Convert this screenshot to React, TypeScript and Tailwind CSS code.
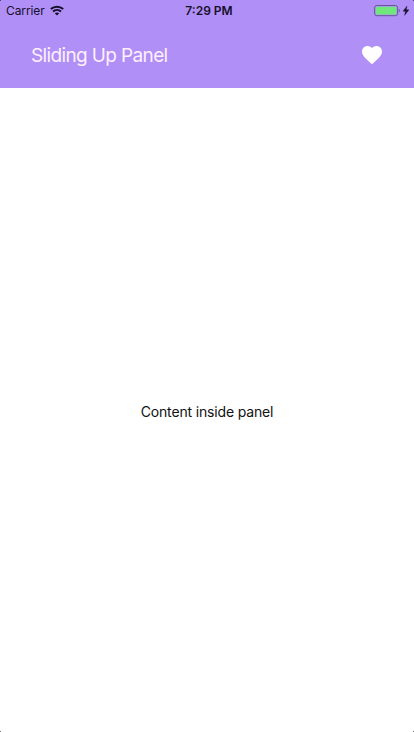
function WifiIcon() {
  return (
    <svg className="h-[11px] w-[14px]" viewBox="0 0 14 11" fill="none" stroke="#17102a" strokeWidth="2">
      <path d="M0.8 4.1 C4.3 0.9 9.7 0.9 13.2 4.1" />
      <path d="M3 6.5 C5.3 4.4 8.7 4.4 11 6.5" />
      <path d="M7 10.5 L4.8 8.3 C6 7.1 8 7.1 9.2 8.3 Z" fill="#17102a" stroke="none" />
    </svg>
  );
}

function BatteryIcon() {
  return (
    <svg className="h-[14px] w-[37px]" viewBox="0 0 37 14">
      <rect x="0.6" y="1.5" width="23" height="10.2" rx="2.2" fill="none" stroke="#65559b" />
      <rect x="1.8" y="2.7" width="20.6" height="7.8" rx="1" fill="#70e77b" />
      <path d="M24.8 4.8 C26.2 5.2 26.2 8 24.8 8.4 Z" fill="#65559b" />
      <path d="M33 2 L29 7.2 H31.5 L30.5 11.5 L35 5.8 H32.3 Z" fill="#17102a" stroke="#17102a" strokeWidth="0.3" />
    </svg>
  );
}

function HeartIcon() {
  return (
    <svg className="h-6 w-6" viewBox="0 0 24 24" fill="#ffffff">
      <path d="M12 21.35l-1.45-1.32C5.4 15.36 2 12.28 2 8.5 2 5.42 4.42 3 7.5 3c1.74 0 3.41.81 4.5 2.09C13.09 3.81 14.76 3 16.5 3 19.58 3 22 5.42 22 8.5c0 3.78-3.4 6.86-8.55 11.54L12 21.35z" />
    </svg>
  );
}

export default function App() {
  return (
    <div className="relative flex h-[732px] w-[414px] flex-col overflow-hidden bg-white font-['Inter','Liberation_Sans',sans-serif]">
      <header className="h-[88px] bg-[#b08ff7]">
        <div className="grid h-[21px] grid-cols-3 items-center text-[12px] leading-[21px] text-[#17102a]">
          <div className="flex items-center gap-[5px] pl-[6px]">
            <span className="w-[39px] whitespace-nowrap tracking-[-0.1px]">Carrier</span>
            <WifiIcon />
          </div>
          <span className="pl-[4px] text-center font-semibold">7:29 PM</span>
          <div className="flex justify-end pr-[3px]">
            <BatteryIcon />
          </div>
        </div>
        <div className="flex h-[67px] items-center justify-between pl-[31px] pr-[30px]">
          <h1 className="whitespace-nowrap pt-[2px] text-[19px] leading-6 tracking-[-0.63px] text-[#fff0fc]">Sliding Up Panel</h1>
          <HeartIcon />
        </div>
      </header>
      <main className="flex flex-1 items-center justify-center pt-[3px]">
        <p className="text-[14px] leading-5 tracking-[-0.16px] text-[#111111]">Content inside panel</p>
      </main>
      <span className="absolute left-0 top-0 size-px bg-[#51436f]" />
      <span className="absolute right-0 top-0 size-px bg-[#51436f]" />
      <span className="absolute bottom-0 left-0 size-px bg-[#777777]" />
      <span className="absolute bottom-0 right-0 size-px bg-[#777777]" />
    </div>
  );
}
